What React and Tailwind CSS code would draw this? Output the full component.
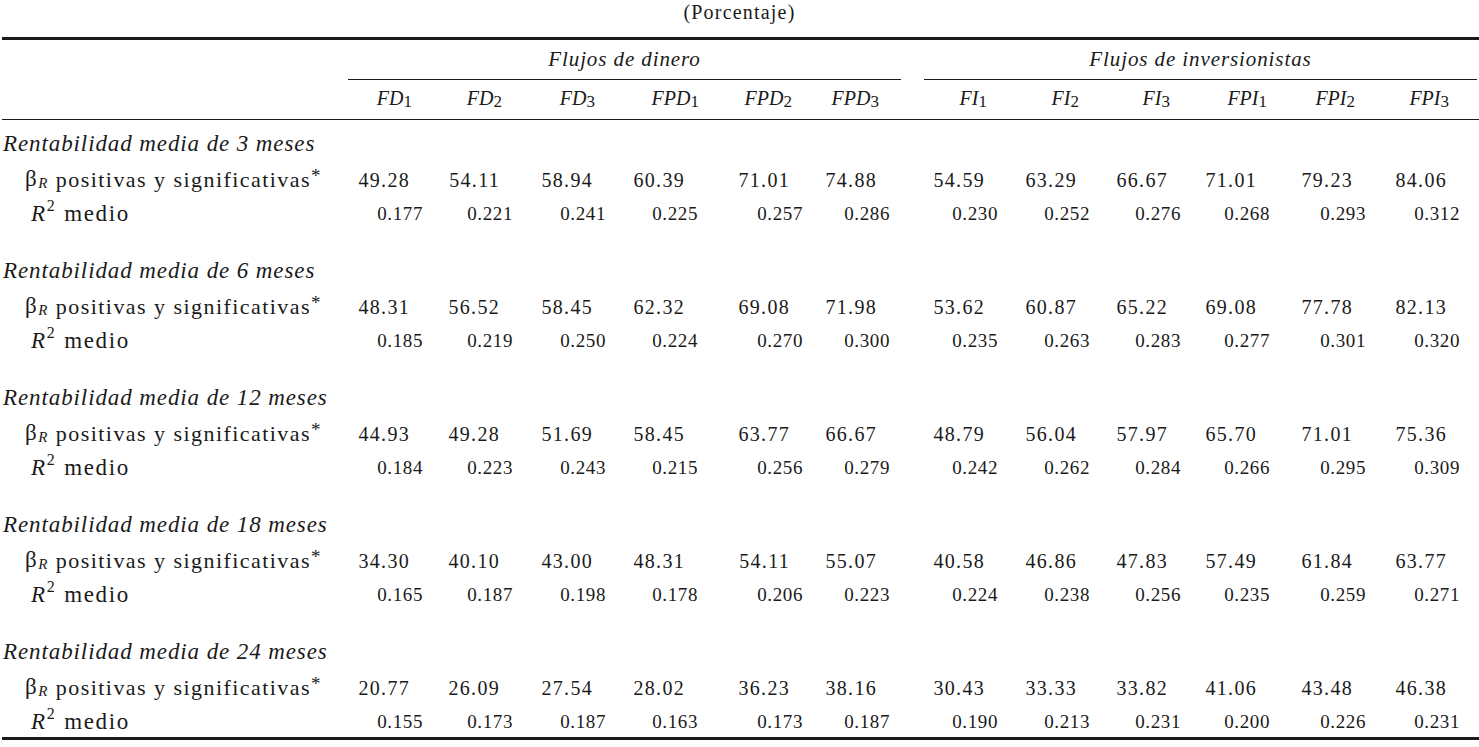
import React from "react";

const COLS =
  "grid grid-cols-[348px_86px_90px_93px_92px_105px_87px_24px_92px_92px_91px_89px_96px_94px]";

const headers = [
  ["FD", "1"], ["FD", "2"], ["FD", "3"], ["FPD", "1"], ["FPD", "2"], ["FPD", "3"],
  ["FI", "1"], ["FI", "2"], ["FI", "3"], ["FPI", "1"], ["FPI", "2"], ["FPI", "3"],
];

const groups = [
  {
    label: "Rentabilidad media de 3 meses",
    beta: ["49.28", "54.11", "58.94", "60.39", "71.01", "74.88", "54.59", "63.29", "66.67", "71.01", "79.23", "84.06"],
    r2: ["0.177", "0.221", "0.241", "0.225", "0.257", "0.286", "0.230", "0.252", "0.276", "0.268", "0.293", "0.312"],
  },
  {
    label: "Rentabilidad media de 6 meses",
    beta: ["48.31", "56.52", "58.45", "62.32", "69.08", "71.98", "53.62", "60.87", "65.22", "69.08", "77.78", "82.13"],
    r2: ["0.185", "0.219", "0.250", "0.224", "0.270", "0.300", "0.235", "0.263", "0.283", "0.277", "0.301", "0.320"],
  },
  {
    label: "Rentabilidad media de 12 meses",
    beta: ["44.93", "49.28", "51.69", "58.45", "63.77", "66.67", "48.79", "56.04", "57.97", "65.70", "71.01", "75.36"],
    r2: ["0.184", "0.223", "0.243", "0.215", "0.256", "0.279", "0.242", "0.262", "0.284", "0.266", "0.295", "0.309"],
  },
  {
    label: "Rentabilidad media de 18 meses",
    beta: ["34.30", "40.10", "43.00", "48.31", "54.11", "55.07", "40.58", "46.86", "47.83", "57.49", "61.84", "63.77"],
    r2: ["0.165", "0.187", "0.198", "0.178", "0.206", "0.223", "0.224", "0.238", "0.256", "0.235", "0.259", "0.271"],
  },
  {
    label: "Rentabilidad media de 24 meses",
    beta: ["20.77", "26.09", "27.54", "28.02", "36.23", "38.16", "30.43", "33.33", "33.82", "41.06", "43.48", "46.38"],
    r2: ["0.155", "0.173", "0.187", "0.163", "0.173", "0.187", "0.190", "0.213", "0.231", "0.200", "0.226", "0.231"],
  },
];

function Cells({ values, kind }) {
  const left = values.slice(0, 6);
  const right = values.slice(6);
  const padL = kind === "r2" ? "pr-[11px]" : "pr-[24px]";
  const padR = kind === "r2" ? "pr-[19px]" : "pr-[32px]";
  const txt =
    kind === "r2"
      ? "text-[19px] tracking-[0.6px]"
      : "text-[20px] tracking-[1.3px]";
  return (
    <>
      {left.map((v, i) => (
        <div key={"l" + i} className={`flex items-center justify-end ${padL} ${txt}`}>
          {v}
        </div>
      ))}
      <div />
      {right.map((v, i) => (
        <div key={"r" + i} className={`flex items-center justify-end ${padR} ${txt}`}>
          {v}
        </div>
      ))}
    </>
  );
}

function Group({ g, last }) {
  return (
    <div className={last ? "pt-[7px] pb-0" : "pt-[7px] pb-[16px]"}>
      <div className="h-[35px] flex items-center pl-[3px] italic text-[23px] tracking-[0.9px] whitespace-nowrap">
        {g.label}
      </div>
      <div className={`${COLS} h-[35px]`}>
        <div className="flex items-center pl-[25px] text-[22px] tracking-[1.45px] whitespace-nowrap">
          <span className="text-[23px]">β</span>
          <sub className="italic text-[15px] mr-[7px]">R</sub>
          <span>positivas y significativas</span>
          <span className="relative -top-[3px] text-[19px]">*</span>
        </div>
        <Cells values={g.beta} kind="beta" />
      </div>
      <div className={`${COLS} ${last ? "h-[32px]" : "h-[34px]"}`}>
        <div className="flex items-center pl-[31px] text-[23px] tracking-[1.6px]">
          <span className="italic">R</span>
          <sup className="text-[16px] mr-[8px] not-italic">2</sup>
          <span>medio</span>
        </div>
        <Cells values={g.r2} kind="r2" />
      </div>
    </div>
  );
}

function Head({ h, i }) {
  const pad =
    i < 6
      ? i === 3
        ? "pr-[12px]"
        : "pr-[24px]"
      : i === 9
      ? "pr-[24px]"
      : "pr-[32px]";
  return (
    <div className={`flex items-center justify-end ${pad}`}>
      <span className="italic text-[20px]">{h[0]}</span>
      <sub className="text-[17px] -bottom-[4px]">{h[1]}</sub>
    </div>
  );
}

export default function App() {
  return (
    <div className="w-[1479px] h-[747px] bg-white text-[#1a1a1a] font-['Liberation_Serif',serif] overflow-hidden">
      <div className="h-[24px] flex items-center justify-center text-[20px] tracking-[1.2px] mb-[13px]">
        (Porcentaje)
      </div>
      <div className="ml-[2px] h-[3px] bg-[#1a1a1a]" />
      <div className="grid grid-cols-[348px_553px_23px_553px] h-[40px]">
        <div />
        <div className="flex items-center justify-center italic text-[21px] tracking-[0.9px] border-b border-[#1a1a1a]">
          Flujos de dinero
        </div>
        <div />
        <div className="flex items-center justify-center italic text-[21px] tracking-[0.9px] border-b border-[#1a1a1a]">
          Flujos de inversionistas
        </div>
      </div>
      <div className={`${COLS} h-[40px] border-b border-[#1a1a1a] ml-[2px] pb-[3px]`}>
        <div />
        {headers.slice(0, 6).map((h, i) => (
          <Head key={i} h={h} i={i} />
        ))}
        <div />
        {headers.slice(6).map((h, i) => (
          <Head key={i + 6} h={h} i={i + 6} />
        ))}
      </div>
      {groups.map((g, i) => (
        <Group key={i} g={g} last={i === groups.length - 1} />
      ))}
      <div className="ml-[2px] h-[3px] bg-[#1a1a1a]" />
    </div>
  );
}
